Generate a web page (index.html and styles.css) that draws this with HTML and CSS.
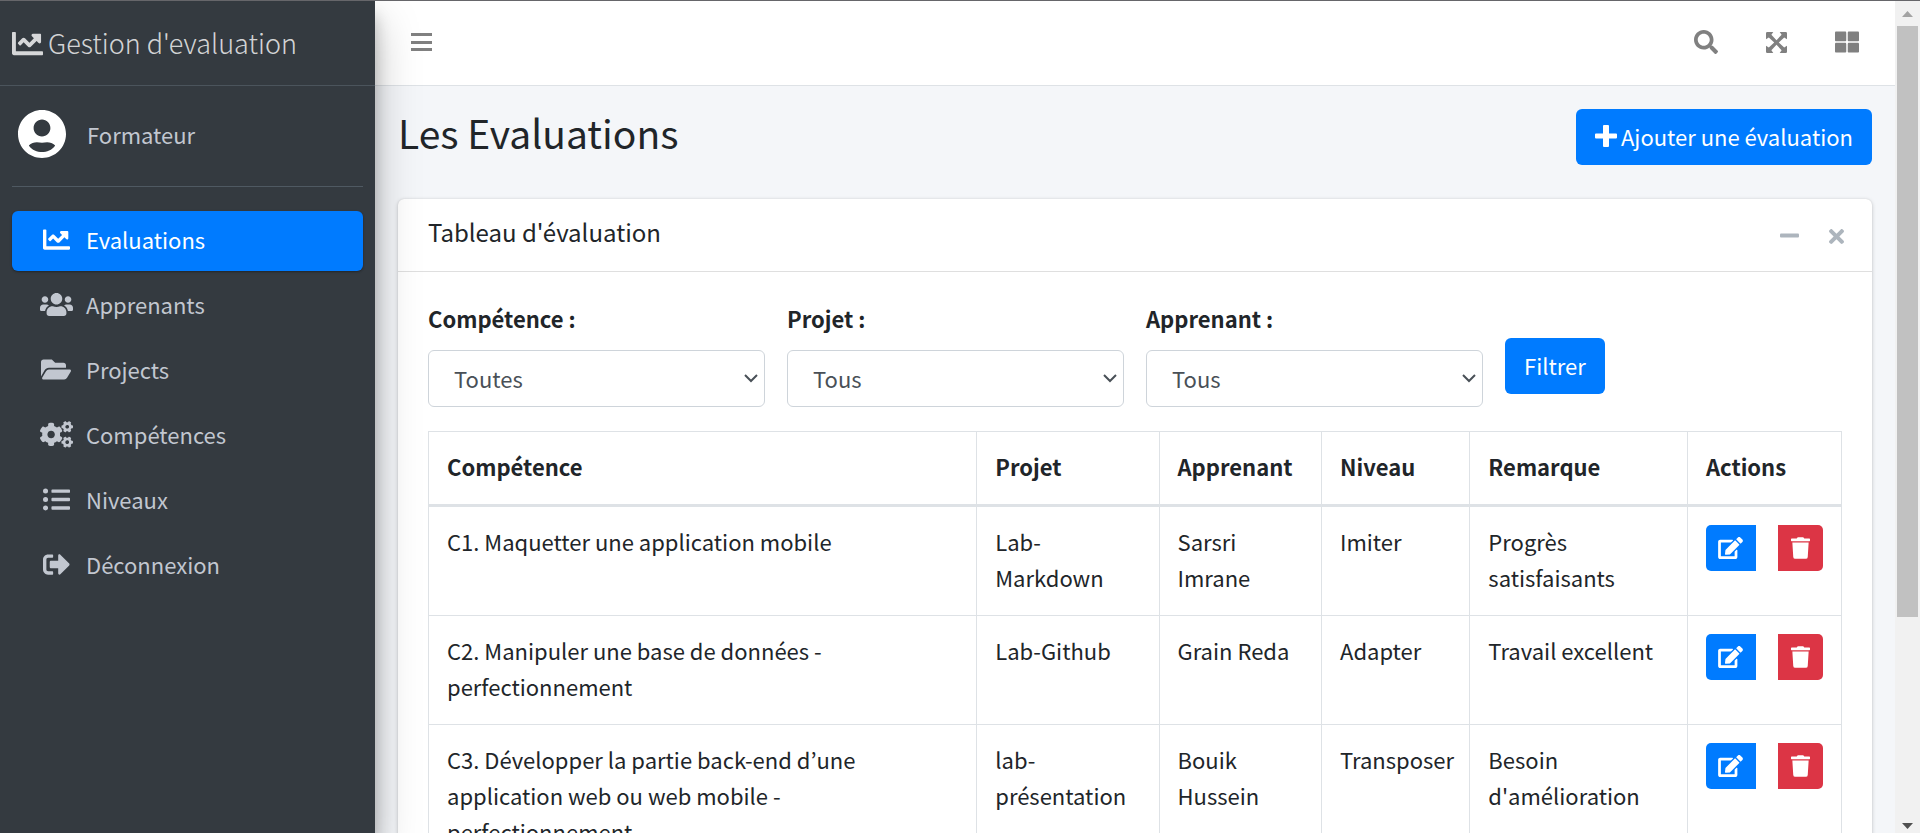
FILE: index.html
```html
<!DOCTYPE html>
<html lang="fr">
<head>
<meta charset="utf-8">
<title>Gestion d'evaluation</title>
<link rel="stylesheet" href="styles.css">
</head>
<body>
<svg class="sprite" aria-hidden="true">
  <symbol id="chart" viewBox="0 0 512 512"><path d="M496 384H64V80c0-8.84-7.16-16-16-16H16C7.16 64 0 71.16 0 80v336c0 17.67 14.33 32 32 32h464c8.84 0 16-7.16 16-16v-32c0-8.84-7.16-16-16-16zM464 96H345.94c-21.38 0-32.09 25.85-16.97 40.97l32.4 32.4L288 242.75l-73.37-73.37c-12.5-12.5-32.76-12.5-45.25 0l-68.69 68.69c-6.25 6.25-6.25 16.38 0 22.63l22.62 22.62c6.25 6.25 16.38 6.25 22.63 0L192 237.25l73.37 73.37c12.5 12.5 32.76 12.5 45.25 0l96-96 32.4 32.4c15.12 15.12 40.97 4.41 40.97-16.97V112c.01-8.84-7.15-16-15.99-16z"/></symbol>
  <symbol id="edit" viewBox="0 0 576 512"><path d="M402.6 83.2l90.2 90.2c3.8 3.8 3.8 10 0 13.8L274.4 405.6l-92.8 10.3c-12.4 1.4-22.9-9.1-21.5-21.5l10.3-92.8L388.8 83.2c3.8-3.8 10-3.8 13.8 0zm162-22.9l-48.8-48.8c-15.2-15.2-39.9-15.2-55.2 0l-35.4 35.4c-3.8 3.8-3.8 10 0 13.8l90.2 90.2c3.8 3.8 10 3.8 13.8 0l35.4-35.4c15.2-15.3 15.2-40 0-55.2zM384 346.2V448H64V128h229.8c3.2 0 6.2-1.3 8.5-3.5l40-40c7.6-7.6 2.2-20.5-8.5-20.5H48C21.5 64 0 85.5 0 112v352c0 26.5 21.5 48 48 48h352c26.5 0 48-21.5 48-48V306.2c0-10.7-12.9-16-20.5-8.5l-40 40c-2.2 2.3-3.5 5.3-3.5 8.5z"/></symbol>
  <symbol id="trash" viewBox="0 0 448 512"><path d="M432 32H312l-9.4-18.7A24 24 0 0 0 281.1 0H166.8a23.72 23.72 0 0 0-21.4 13.3L136 32H16A16 16 0 0 0 0 48v32a16 16 0 0 0 16 16h416a16 16 0 0 0 16-16V48a16 16 0 0 0-16-16zM53.2 467a48 48 0 0 0 47.9 45h245.8a48 48 0 0 0 47.9-45L416 128H32z"/></symbol>
  <symbol id="chevron" viewBox="0 0 14 9"><path d="M1 1l6 6 6-6" fill="none" stroke="currentColor" stroke-width="2"/></symbol>
</svg>
<div class="app">
  <aside class="sidebar">
    <a class="brand" href="#"><svg class="icon brand-icon"><use href="#chart"/></svg><span>Gestion d'evaluation</span></a>
    <div class="sidebar-body">
      <div class="user">
        <svg class="icon avatar" viewBox="2 2 20 20"><path d="M12 2C6.48 2 2 6.48 2 12s4.48 10 10 10 10-4.48 10-10S17.52 2 12 2zm0 4c1.93 0 3.5 1.57 3.5 3.5S13.93 13 12 13s-3.500-1.570-3.500-3.500S10.070 6 12 6zm0 13.500c-2.030 0-4.120-.72-5.500-2.700 1.500-1.700 3.500-1.500 5.500-1.200 2-.3 4-.5 5.500 1.200-1.380 1.980-3.470 2.700-5.500 2.700z"/></svg>
        <a href="#">Formateur</a>
      </div>
      <nav class="nav">
        <a class="nav-link active" href="#"><span class="nav-icon"><svg class="icon w27"><use href="#chart"/></svg></span>Evaluations</a>
        <a class="nav-link" href="#"><span class="nav-icon"><svg class="icon w33" viewBox="0 0 640 512"><path d="M96 224c35.3 0 64-28.7 64-64s-28.7-64-64-64-64 28.7-64 64 28.7 64 64 64zm448 0c35.3 0 64-28.7 64-64s-28.7-64-64-64-64 28.7-64 64 28.7 64 64 64zm32 32h-64c-17.6 0-33.5 7.1-45.1 18.6 40.3 22.1 68.9 62 75.1 109.4h66c17.7 0 32-14.3 32-32v-32c0-35.3-28.7-64-64-64zm-256 0c61.9 0 112-50.1 112-112S381.9 32 320 32 208 82.1 208 144s50.1 112 112 112zm76.800 32h-8.300c-20.800 10-43.900 16-68.500 16s-47.600-6-68.500-16h-8.300C179.600 288 128 339.600 128 403.200V432c0 26.500 21.500 48 48 48h288c26.500 0 48-21.500 48-48v-28.800c0-63.600-51.600-115.200-115.200-115.200zm-223.700-13.400C161.500 263.100 145.600 256 128 256H64c-35.300 0-64 28.700-64 64v32c0 17.700 14.300 32 32 32h65.900c6.300-47.400 34.900-87.300 75.200-109.400z"/></svg></span>Apprenants</a>
        <a class="nav-link" href="#"><span class="nav-icon"><svg class="icon w30" viewBox="0 0 576 512"><path d="M572.694 292.093L500.27 416.248A63.997 63.997 0 0 1 444.989 448H45.025c-18.523 0-30.064-20.093-20.731-36.093l72.424-124.155A64 64 0 0 1 152 256h399.964c18.523 0 30.064 20.093 20.73 36.093zM152 224h328v-48c0-26.51-21.49-48-48-48H272l-64-64H48C21.49 64 0 85.49 0 112v278.046l69.077-118.418C86.214 242.25 117.989 224 152 224z"/></svg></span>Projects</a>
        <a class="nav-link" href="#"><span class="nav-icon"><svg class="icon w33" viewBox="0 0 640 512"><path d="M512.1 191l-8.2 14.3c-3 5.3-9.4 7.5-15.1 5.4-11.8-4.4-22.6-10.7-32.1-18.6-4.6-3.8-5.8-10.5-2.8-15.7l8.2-14.3c-6.9-8-12.3-17.3-15.9-27.4h-16.5c-6 0-11.2-4.3-12.2-10.3-2-12-2.1-24.6 0-37.1 1-6 6.2-10.4 12.2-10.4h16.5c3.6-10.1 9-19.4 15.9-27.4l-8.2-14.3c-3-5.2-1.9-11.9 2.8-15.7 9.5-7.9 20.4-14.2 32.1-18.6 5.7-2.1 12.1.1 15.1 5.4l8.2 14.3c10.5-1.9 21.2-1.9 31.7 0L552 6.3c3-5.3 9.4-7.5 15.1-5.4 11.8 4.4 22.6 10.7 32.1 18.6 4.6 3.8 5.8 10.5 2.8 15.7l-8.2 14.3c6.9 8 12.3 17.3 15.9 27.4h16.5c6 0 11.2 4.3 12.2 10.3 2 12 2.1 24.6 0 37.1-1 6-6.2 10.4-12.2 10.4h-16.5c-3.6 10.1-9 19.4-15.9 27.4l8.2 14.3c3 5.2 1.9 11.9-2.8 15.7-9.5 7.9-20.4 14.2-32.1 18.6-5.7 2.1-12.1-.1-15.1-5.4l-8.2-14.3c-10.4 1.9-21.2 1.9-31.7 0zm-10.5-58.8c38.5 29.6 82.4-14.3 52.8-52.8-38.5-29.7-82.4 14.3-52.8 52.8zM386.3 286.1l33.7 16.8c10.1 5.8 14.5 18.1 10.5 29.1-8.9 24.2-26.4 46.4-42.6 65.8-7.4 8.9-20.2 11.1-30.3 5.3l-29.1-16.8c-16 13.7-34.6 24.6-54.9 31.7v33.6c0 11.6-8.3 21.6-19.7 23.6-24.6 4.2-50.4 4.4-75.9 0-11.5-2-20-11.9-20-23.6V418c-20.3-7.2-38.9-18-54.9-31.7L74 403c-10 5.8-22.9 3.6-30.3-5.3-16.2-19.4-33.3-41.6-42.2-65.7-4-10.9.4-23.2 10.5-29.1l33.3-16.8c-3.9-20.9-3.9-42.4 0-63.4L12 205.8c-10.1-5.8-14.6-18.1-10.5-29 8.9-24.2 26-46.4 42.2-65.8 7.4-8.9 20.2-11.1 30.3-5.3l29.1 16.8c16-13.7 34.6-24.6 54.9-31.7V57.1c0-11.5 8.2-21.5 19.6-23.5 24.6-4.2 50.5-4.4 76-.1 11.5 2 20 11.9 20 23.6v33.6c20.3 7.2 38.9 18 54.9 31.7l29.1-16.8c10-5.8 22.9-3.6 30.3 5.3 16.2 19.4 33.2 41.6 42.1 65.8 4 10.9.1 23.2-10 29.1l-33.7 16.8c3.9 21 3.9 42.5 0 63.5zm-117.6 21.1c59.2-77-28.7-164.9-105.7-105.7-59.2 77 28.7 164.9 105.7 105.7zm243.4 182.7l-8.2 14.3c-3 5.3-9.4 7.5-15.1 5.4-11.8-4.4-22.6-10.7-32.1-18.6-4.6-3.8-5.8-10.5-2.8-15.7l8.2-14.3c-6.9-8-12.3-17.3-15.9-27.4h-16.5c-6 0-11.2-4.3-12.2-10.3-2-12-2.1-24.6 0-37.1 1-6 6.2-10.4 12.2-10.4h16.5c3.6-10.1 9-19.4 15.9-27.4l-8.2-14.3c-3-5.2-1.9-11.9 2.8-15.7 9.5-7.9 20.4-14.2 32.1-18.6 5.7-2.1 12.1.1 15.1 5.4l8.2 14.3c10.5-1.9 21.2-1.9 31.7 0l8.2-14.3c3-5.3 9.4-7.5 15.1-5.4 11.8 4.4 22.6 10.7 32.1 18.6 4.6 3.8 5.8 10.5 2.8 15.7l-8.2 14.3c6.9 8 12.3 17.3 15.9 27.4h16.5c6 0 11.2 4.3 12.2 10.3 2 12 2.1 24.6 0 37.1-1 6-6.2 10.4-12.2 10.4h-16.5c-3.6 10.1-9 19.4-15.9 27.4l8.2 14.3c3 5.2 1.9 11.9-2.8 15.7-9.5 7.9-20.4 14.2-32.1 18.6-5.7 2.1-12.1-.1-15.1-5.4l-8.2-14.3c-10.4 1.9-21.2 1.9-31.7 0zM501.6 431c38.500 29.600 82.400-14.300 52.800-52.800-38.500-29.600-82.400 14.300-52.800 52.800z"/></svg></span>Compétences</a>
        <a class="nav-link" href="#"><span class="nav-icon"><svg class="icon w27" viewBox="0 0 512 512"><path d="M48 48a48 48 0 1 0 48 48 48 48 0 0 0-48-48zm0 160a48 48 0 1 0 48 48 48 48 0 0 0-48-48zm0 160a48 48 0 1 0 48 48 48 48 0 0 0-48-48zm448 16H176a16 16 0 0 0-16 16v32a16 16 0 0 0 16 16h320a16 16 0 0 0 16-16v-32a16 16 0 0 0-16-16zm0-320H176a16 16 0 0 0-16 16v32a16 16 0 0 0 16 16h320a16 16 0 0 0 16-16V80a16 16 0 0 0-16-16zm0 160H176a16 16 0 0 0-16 16v32a16 16 0 0 0 16 16h320a16 16 0 0 0 16-16v-32a16 16 0 0 0-16-16z"/></svg></span>Niveaux</a>
        <a class="nav-link" href="#"><span class="nav-icon"><svg class="icon w27" viewBox="0 0 512 512"><path d="M497 273L329 441c-15 15-41 4.500-41-17v-96H152c-13.300 0-24-10.700-24-24v-96c0-13.300 10.700-24 24-24h136V88c0-21.400 25.900-32 41-17l168 168c9.300 9.400 9.300 24.600 0 34zM192 436v-40c0-6.600-5.400-12-12-12H96c-17.700 0-32-14.300-32-32V160c0-17.700 14.300-32 32-32h84c6.600 0 12-5.400 12-12V76c0-6.600-5.400-12-12-12H96c-53 0-96 43-96 96v192c0 53 43 96 96 96h84c6.600 0 12-5.400 12-12z"/></svg></span>Déconnexion</a>
      </nav>
    </div>
  </aside>

  <div class="page">
    <header class="topbar">
      <button class="tool" type="button" aria-label="Menu"><svg class="icon w21" viewBox="0 0 21 21"><path d="M0 1h21v3H0zM0 9h21v3H0zM0 16h21v3H0z"/></svg></button>
      <div class="tools">
        <button class="tool" type="button" aria-label="Rechercher"><svg class="icon w24" viewBox="0 0 512 512"><path d="M505 442.7L405.3 343c-4.500-4.500-10.600-7-17-7H372c27.600-35.300 44-79.700 44-128C416 93.100 322.900 0 208 0S0 93.100 0 208s93.100 208 208 208c48.300 0 92.700-16.400 128-44v16.300c0 6.400 2.500 12.500 7 17l99.700 99.700c9.400 9.400 24.600 9.400 33.900 0l28.300-28.300c9.400-9.400 9.400-24.600.1-34zM208 336c-70.700 0-128-57.200-128-128 0-70.700 57.200-128 128-128 70.700 0 128 57.200 128 128 0 70.700-57.200 128-128 128z"/></svg></button>
        <button class="tool" type="button" aria-label="Plein écran"><svg class="icon w21" viewBox="0 0 21 21"><path d="M0 1.200Q0 0 1.200 0H7.300L5.400 2.800 10.500 8.200 15.600 2.800 13.700 0H19.800Q21 0 21 1.200V7.300L18.200 5.400 12.800 10.500 18.200 15.600 21 13.700V19.800Q21 21 19.800 21H13.700L15.600 18.200 10.500 12.800 5.400 18.200 7.300 21H1.200Q0 21 0 19.800V13.700L2.800 15.600 8.200 10.500 2.800 5.400 0 7.300z"/></svg></button>
        <button class="tool" type="button" aria-label="Applications"><svg class="icon w24" viewBox="0 0 512 512"><path d="M296 32h192c13.255 0 24 10.745 24 24v160c0 13.255-10.745 24-24 24H296c-13.255 0-24-10.745-24-24V56c0-13.255 10.745-24 24-24zm-80 0H24C10.745 32 0 42.745 0 56v160c0 13.255 10.745 24 24 24h192c13.255 0 24-10.745 24-24V56c0-13.255-10.745-24-24-24zM0 296v160c0 13.255 10.745 24 24 24h192c13.255 0 24-10.745 24-24V296c0-13.255-10.745-24-24-24H24c-13.255 0-24 10.745-24 24zm296 184h192c13.255 0 24-10.745 24-24V296c0-13.255-10.745-24-24-24H296c-13.255 0-24 10.745-24 24v160c0 13.255 10.745 24 24 24z"/></svg></button>
      </div>
    </header>

    <main class="content">
      <div class="page-head">
        <h1>Les Evaluations</h1>
        <a class="btn" href="#"><svg class="icon w22" viewBox="0 0 22 22"><path d="M9 0h4q1 0 1 1v7.500h7q1 0 1 1v3q0 1-1 1h-7V21q0 1-1 1H9q-1 0-1-1v-7.500H1q-1 0-1-1v-3q0-1 1-1h7V1q0-1 1-1z"/></svg>Ajouter une évaluation</a>
      </div>

      <section class="card">
        <header class="card-head">
          <h2>Tableau d'évaluation</h2>
          <div class="card-tools">
            <button type="button" aria-label="Réduire"><svg class="icon w19" viewBox="0 0 19 19"><rect y="7" width="19" height="4" rx="1"/></svg></button>
            <button type="button" aria-label="Fermer"><svg class="icon w15" viewBox="0 80 352 352"><path d="M242.720 256l100.070-100.070c12.280-12.280 12.280-32.190 0-44.480l-22.240-22.240c-12.280-12.280-32.190-12.280-44.480 0L176 189.280 75.930 89.210c-12.280-12.280-32.190-12.280-44.480 0L9.210 111.450c-12.280 12.280-12.280 32.190 0 44.480L109.280 256 9.210 356.070c-12.280 12.280-12.280 32.190 0 44.480l22.240 22.240c12.280 12.280 32.200 12.280 44.480 0L176 322.720l100.070 100.070c12.280 12.280 32.200 12.280 44.480 0l22.240-22.240c12.280-12.280 12.280-32.190 0-44.480L242.720 256z"/></svg></button>
          </div>
        </header>
        <div class="card-body">
          <form class="filters">
            <div class="field"><label for="competence">Compétence :</label><div class="select"><select id="competence"><option>Toutes</option></select><svg class="chevron"><use href="#chevron"/></svg></div></div>
            <div class="field"><label for="projet">Projet :</label><div class="select"><select id="projet"><option>Tous</option></select><svg class="chevron"><use href="#chevron"/></svg></div></div>
            <div class="field"><label for="apprenant">Apprenant :</label><div class="select"><select id="apprenant"><option>Tous</option></select><svg class="chevron"><use href="#chevron"/></svg></div></div>
            <button class="btn filter-btn" type="button">Filtrer</button>
          </form>
          <table class="table">
            <colgroup><col class="c-comp"><col class="c-proj"><col class="c-app"><col class="c-niv"><col class="c-rem"><col class="c-act"></colgroup>
            <thead><tr><th>Compétence</th><th>Projet</th><th>Apprenant</th><th>Niveau</th><th>Remarque</th><th>Actions</th></tr></thead>
            <tbody>
              <tr><td>C1. Maquetter une application mobile</td><td>Lab-Markdown</td><td>Sarsri<br>Imrane</td><td>Imiter</td><td>Progrès satisfaisants</td>
                <td class="act-cell"><div class="actions"><a class="act edit" href="#" aria-label="Modifier"><svg class="icon w25"><use href="#edit"/></svg></a><button class="act trash" type="button" aria-label="Supprimer"><svg class="icon w19"><use href="#trash"/></svg></button></div></td></tr>
              <tr><td>C2. Manipuler une base de données - perfectionnement</td><td>Lab-Github</td><td>Grain Reda</td><td>Adapter</td><td>Travail excellent</td>
                <td class="act-cell"><div class="actions"><a class="act edit" href="#" aria-label="Modifier"><svg class="icon w25"><use href="#edit"/></svg></a><button class="act trash" type="button" aria-label="Supprimer"><svg class="icon w19"><use href="#trash"/></svg></button></div></td></tr>
              <tr><td>C3. Développer la partie back-end d’une application web ou web mobile - perfectionnement</td><td>lab-présentation</td><td>Bouik Hussein</td><td>Transposer</td><td>Besoin d'amélioration</td>
                <td class="act-cell"><div class="actions"><a class="act edit" href="#" aria-label="Modifier"><svg class="icon w25"><use href="#edit"/></svg></a><button class="act trash" type="button" aria-label="Supprimer"><svg class="icon w19"><use href="#trash"/></svg></button></div></td></tr>
            </tbody>
          </table>
        </div>
      </section>
    </main>
  </div>

  <div class="scrollbar" aria-hidden="true">
    <svg class="arrow up" viewBox="0 0 11 6"><path d="M0 6L5.500 0 11 6z"/></svg>
    <div class="track"><div class="thumb"></div></div>
    <svg class="arrow down" viewBox="0 0 11 6"><path d="M0 0L5.500 6 11 0z"/></svg>
  </div>
</div>
</body>
</html>
```

FILE: styles.css
```css
*, *::before, *::after { box-sizing: border-box; }

body {
  margin: 0;
  font-family: "Noto Sans CJK KR", "Noto Sans", sans-serif;
  font-size: 22px;
  line-height: 36px;
  color: #212529;
  background: #f4f6f9;
}

a { color: inherit; text-decoration: none; }
button, select { font: inherit; margin: 0; }
button { border: 0; cursor: pointer; }
h1, h2 { margin: 0; font-weight: 400; }

.sprite { display: none; }
.icon { display: block; flex: none; fill: currentColor; }
.w15 { width: 15px; height: 15px; }
.w19 { width: 19px; height: 22px; }
.w21 { width: 21px; height: 21px; }
.w22 { width: 22px; height: 22px; }
.w24 { width: 24px; height: 24px; }
.w25 { width: 25px; height: 22px; }
.w27 { width: 27px; height: 27px; }
.w30 { width: 30px; height: 27px; }
.w33 { width: 33px; height: 27px; }

.app {
  display: flex;
  height: 100vh;
  overflow: hidden;
  border-top: 1px solid #66666a;
}

/* Sidebar */
.sidebar {
  flex: none;
  width: 375px;
  z-index: 1;
  color: #c2c7d0;
  background: #343a40;
  box-shadow: 0 21px 42px rgba(0, 0, 0, .25), 0 15px 15px rgba(0, 0, 0, .22);
}
.brand {
  display: flex;
  align-items: center;
  gap: 5px;
  height: 85px;
  padding: 0 12px;
  font-size: 27px;
  font-weight: 300;
  color: rgba(255, 255, 255, .8);
  border-bottom: 1px solid #4b545c;
}
.brand-icon { width: 31px; height: 31px; }
.sidebar-body { padding: 0 12px; }
.user {
  display: flex;
  align-items: center;
  gap: 21px;
  padding: 24px 6px 28px;
  margin-bottom: 24px;
  border-bottom: 1px solid #4f5962;
}
.avatar { width: 48px; height: 48px; color: #fff; }
.nav { display: flex; flex-direction: column; gap: 5px; }
.nav-link {
  display: flex;
  align-items: center;
  gap: 10px;
  padding: 10px 24px 14px;
  border-radius: 6px;
}
.nav-link.active {
  color: #fff;
  background: #007bff;
  box-shadow: 0 1px 3px rgba(0, 0, 0, .12), 0 1px 2px rgba(0, 0, 0, .24);
}
.nav-icon { display: flex; justify-content: center; width: 40px; }

/* Top bar */
.page { flex: 1; min-width: 0; }
.topbar {
  display: flex;
  align-items: center;
  justify-content: space-between;
  height: 85px;
  padding: 0 36px 2px;
  background: #fff;
  border-bottom: 1px solid #dee2e6;
}
.tools { display: flex; gap: 48px; }
.tool { display: flex; align-items: center; padding: 0; color: #808080; background: none; }

/* Content */
.content { padding: 23px 23px 0; }
.page-head {
  display: flex;
  justify-content: space-between;
  align-items: flex-start;
  margin-bottom: 34px;
}
.page-head h1 { font-size: 39px; line-height: 46px; }
.btn {
  display: flex;
  align-items: center;
  gap: 4px;
  padding: 9px 19px 11px;
  color: #fff;
  background: #007bff;
  border-radius: 6px;
}

.card {
  background: #fff;
  border-radius: 6px;
  box-shadow: 0 0 1px rgba(0, 0, 0, .13), 0 1px 4px rgba(0, 0, 0, .2);
}
.card-head {
  display: flex;
  justify-content: space-between;
  align-items: flex-start;
  padding: 15px 28px 21px 30px;
  border-bottom: 1px solid #dfdfdf;
}
.card-head h2 { font-size: 24px; line-height: 36px; }
.card-tools { display: flex; align-items: center; gap: 30px; padding-top: 11px; }
.card-tools button { padding: 0; color: #adb5bd; background: none; }
.card-body { padding: 28px 30px 30px; }

.filters {
  display: grid;
  grid-template-columns: repeat(4, 1fr);
  gap: 22px;
  margin-bottom: 24px;
}
.field { display: flex; flex-direction: column; gap: 14px; }
.field label { font-weight: 700; }
.select { display: grid; align-items: center; }
.select select, .chevron { grid-area: 1 / 1; }
.select select {
  appearance: none;
  width: 100%;
  height: 57px;
  padding: 0 40px 2px 25px;
  color: #495057;
  background: #fff;
  border: 1px solid #ced4da;
  border-radius: 6px;
}
.chevron {
  justify-self: end;
  width: 14px;
  height: 9px;
  margin-right: 7px;
  color: #495057;
  pointer-events: none;
}
.filter-btn { justify-self: start; align-self: start; margin-top: 38px; }

/* Table */
.table {
  width: 100%;
  table-layout: fixed;
  border-collapse: collapse;
}
.c-comp { width: 38.8%; }
.c-proj { width: 12.9%; }
.c-app { width: 11.5%; }
.c-niv { width: 10.5%; }
.c-rem { width: 15.4%; }
.c-act { width: 10.9%; }
.table th, .table td {
  padding: 16px 18px 20px;
  text-align: left;
  vertical-align: top;
  border: 1px solid #dee2e6;
}
.table th { border-bottom-width: 3px; }
.table .act-cell { padding-top: 18px; }
.actions { display: flex; justify-content: space-between; }
.act {
  display: flex;
  align-items: center;
  justify-content: center;
  height: 46px;
  padding: 0 13px;
  color: #fff;
}
.edit { width: 50px; background: #007bff; border-radius: 5px 0 0 5px; }
.trash { background: #dc3545; border-radius: 0 5px 5px 0; }

/* Scrollbar */
.scrollbar {
  display: flex;
  flex-direction: column;
  align-items: center;
  flex: none;
  width: 25px;
  padding: 10px 0 4px;
  background: #f1f1f1;
}
.arrow { width: 11px; height: 6px; }
.up { fill: #a3a3a3; }
.down { fill: #505050; }
.track { flex: 1; width: 21px; margin: 9px 0; }
.thumb { height: 75%; background: #c1c1c1; }
```
